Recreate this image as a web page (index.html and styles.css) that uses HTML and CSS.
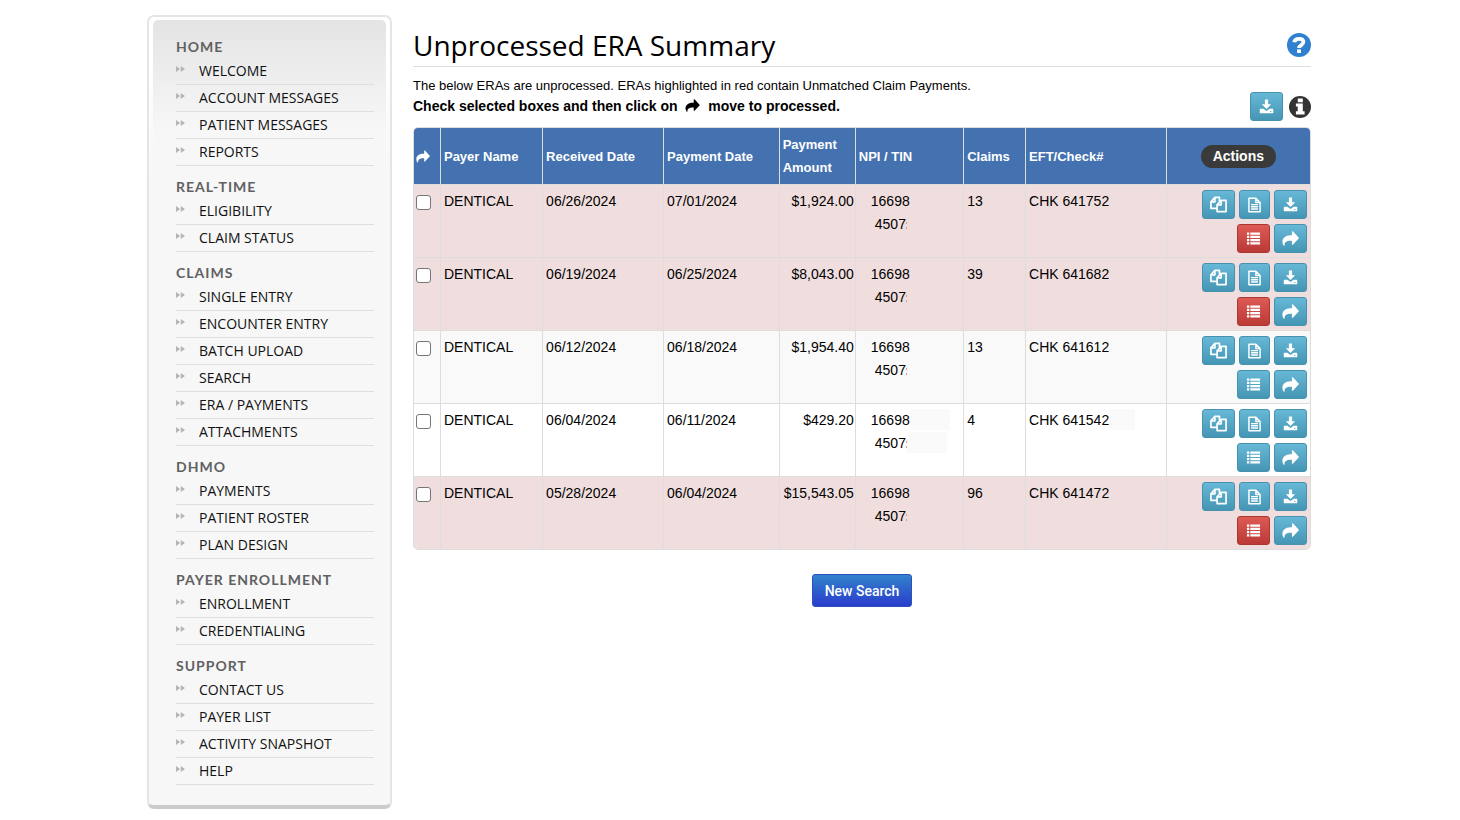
FILE: index.html
```html
<!DOCTYPE html>
<html lang="en">
<head>
<meta charset="utf-8">
<title>Unprocessed ERA Summary</title>
<link rel="stylesheet" href="styles.css">
</head>
<body>
<svg class="sprite" aria-hidden="true">
  <symbol id="i-share" viewBox="0 0 18 16"><path d="M10.500 .8v3.700H9C3.400 4.500.4 7.800.4 11.400c0 1.600.5 3 1.500 4.300.3.400.9.200.8-.3C2.400 12 4.800 10.400 9 10.400h1.500v3.700c0 .6.6.8 1 .4l6.100-6.400c.3-.3.3-.8 0-1.100L11.500.4c-.4-.4-1-.2-1 .4z"/></symbol>
  <symbol id="i-download" viewBox="0 0 16 16"><path d="M6.300 .5h3.400v5h3.300L8 10.600 3 5.500h3.300z"/><path fill-rule="evenodd" d="M1.500 10.300h3.200L8 12.800l3.300-2.500h3.200c.4 0 .7.3.7.7v3.600c0 .4-.3.700-.7.700h-13c-.4 0-.7-.3-.7-.7V11c0-.4.3-.7.7-.7zM12 12.800v1.100h1.200v-1.100z"/></symbol>
  <symbol id="i-copy" viewBox="0 0 18 18"><path fill="none" stroke="currentColor" stroke-width="1.800" stroke-linejoin="round" d="M7.300 13H1V6.200L5.200 1.500H10v4M5.200 1.500v4.700H1M11.800 4.700H17V16.500H7.500V9.300zM11.800 4.700v4.600H7.500"/></symbol>
  <symbol id="i-file" viewBox="0 0 14 16"><path fill="none" stroke="currentColor" stroke-width="1.600" stroke-linejoin="round" d="M1 .8h7.500L13 5.300v9.900H1zM8.500.8v4.500H13"/><path d="M3.300 6.800h7.400v1.400H3.300zM3.300 9.200h7.400v1.400H3.300zM3.300 11.600h7.400v1.400H3.300z"/></symbol>
  <symbol id="i-list" viewBox="0 0 16 16"><path d="M1 1.500h2.500v2.400H1zM4.600 1.500H15v2.400H4.600zM1 5h2.500v2.400H1zM4.600 5H15v2.400H4.600zM1 8.500h2.500v2.400H1zM4.600 8.500H15v2.400H4.600zM1 12h2.500v2.400H1zM4.600 12H15v2.400H4.600z"/></symbol>
  <symbol id="i-help" viewBox="0 0 24 24"><circle cx="12" cy="12" r="12" fill="#2f80cf"/><path fill="none" stroke="#fff" stroke-width="3.800" d="M7.200 9.200C7.600 6.800 9.500 5.800 12 5.800c2.600 0 4.400 1.200 4.400 3.300 0 3.200-4.300 2.800-4.300 6"/><path fill="#fff" d="M10.100 16.400H14V20h-3.900z"/></symbol>
  <symbol id="i-info" viewBox="0 0 22 22"><circle cx="11" cy="11" r="11" fill="#333"/><path fill="#fff" d="M8.800 2.600h5v3.600h-5zM6.900 7.400h6.900v7.900h1.800v3.200H6.900v-3.200h1.800v-4.700H6.900z"/></symbol>
  <symbol id="i-bullet" viewBox="0 0 9 6"><path d="M0 0l4.200 3L0 6zM4.800 0L9 3 4.800 6z"/></symbol>
</svg>
<div class="page">
  <nav class="sidebar" aria-label="Main"><div class="menu" id="menu"></div></nav>
  <main class="content">
    <header class="title-bar">
      <h1>Unprocessed ERA Summary</h1>
      <button type="button" class="plain" aria-label="Help"><svg class="help"><use href="#i-help"/></svg></button>
    </header>
    <section class="intro">
      <div class="notes">
        <p>The below ERAs are unprocessed. ERAs highlighted in red contain Unmatched Claim Payments.</p>
        <p class="strong">Check selected boxes and then click on <svg class="inline-share"><use href="#i-share"/></svg> move to processed.</p>
      </div>
      <div class="tools">
        <button type="button" class="btn" aria-label="Download all"><svg class="ico"><use href="#i-download"/></svg></button>
        <button type="button" class="plain" aria-label="Information"><svg class="info"><use href="#i-info"/></svg></button>
      </div>
    </section>
    <table class="eras">
      <colgroup><col class="c-check"><col class="c-payer"><col class="c-received"><col class="c-paid"><col class="c-amount"><col class="c-npi"><col class="c-claims"><col class="c-eft"><col class="c-actions"></colgroup>
      <thead><tr>
        <th scope="col" aria-label="Move"><svg class="head-share"><use href="#i-share"/></svg></th>
        <th scope="col">Payer Name</th><th scope="col">Received Date</th><th scope="col">Payment Date</th><th scope="col">Payment Amount</th><th scope="col">NPI / TIN</th><th scope="col">Claims</th><th scope="col">EFT/Check#</th>
        <th scope="col" class="center"><span class="pill">Actions</span></th>
      </tr></thead>
      <tbody id="rows"></tbody>
    </table>
    <div class="footer"><button type="button" class="search">New Search</button></div>
  </main>
</div>
<script src="app.js"></script>
</body>
</html>
```

FILE: styles.css
```css
* { box-sizing: border-box; }
body { margin: 0; background: #fff; color: #000; font-family: "Liberation Sans", Arial, sans-serif; font-size: 14px; }
.sprite { display: none; }
svg { fill: currentColor; }
h1, h2, p, ul { margin: 0; padding: 0; }
.page { display: flex; align-items: flex-start; gap: 21px; max-width: 1168px; margin: 0 auto; padding: 15px 3px 11px 1px; }

.sidebar { flex: 0 0 245px; border: 2px solid #e5e5e5; border-bottom: 4px solid #ccc; border-radius: 7px; padding: 3px 4px; background: linear-gradient(#fff, #fff 40px, #f7f7f7 160px); }
.menu { padding: 6px 12px 17px 23px; border-radius: 5px; background: linear-gradient(#e4e4e4, #f7f7f7 110px); }
.menu h2 { padding-top: 10px; font: 700 14px/22px Lato, sans-serif; letter-spacing: 1px; color: #606163; }
.menu ul { list-style: none; }
.menu li { border-bottom: 1px solid #dfdfdf; }
.menu a { display: flex; align-items: flex-start; gap: 14px; color: #111; font: 14px/26px "Open Sans", sans-serif; text-decoration: none; }
.bullet { width: 9px; height: 6px; margin-top: 8px; color: #b5b5b5; }

.content { flex: 1; min-width: 0; }
.title-bar { display: flex; align-items: center; justify-content: space-between; height: 52px; padding-top: 9px; border-bottom: 1px solid #ddd; }
h1 { font: 400 28px/40px "Open Sans", sans-serif; }
.plain { display: flex; padding: 0; border: 0; background: none; }
.help { width: 24px; height: 24px; }
.info { width: 22px; height: 22px; }
.intro { display: flex; justify-content: space-between; padding: 9px 0 6px; }
.notes { font-size: 13px; line-height: 20px; }
.notes .strong { font-weight: 700; font-size: 14px; }
.inline-share { width: 15px; height: 13px; margin: 0 4px; vertical-align: -1px; }
.tools { display: flex; align-items: center; gap: 6px; padding-top: 16px; }

.btn { display: inline-flex; align-items: center; justify-content: center; height: 29px; padding: 0 8px; color: #fff; border: 1px solid #4793af; border-radius: 3px; background: linear-gradient(#66b8d6, #4496b4); }
.btn.red { border-color: #a83832; background: linear-gradient(#dd5a55, #bb3a36); }
.ico { width: 15px; height: 15px; }
.ico.narrow { width: 13px; height: 16px; }
.ico.wide { width: 17px; height: 17px; margin: 0 -1px; }

.eras { width: 100%; table-layout: fixed; border: 1px solid #ddd; border-radius: 5px; border-spacing: 0; overflow: hidden; }
.c-check { width: 2.9%; } .c-payer { width: 11.4%; } .c-received { width: 13.5%; } .c-paid { width: 12.9%; }
.c-amount { width: 8.5%; } .c-npi { width: 12.1%; } .c-claims { width: 6.9%; } .c-eft { width: 15.7%; } .c-actions { width: 16.1%; }
.eras th, .eras td { padding: 5px 3px; line-height: 23px; text-align: left; }
.eras tr > :first-child { padding: 5px 2px; }
.eras th + th, .eras td + td { border-left: 1px solid #ddd; }
.eras th { background: #4472b1; color: #fff; font-size: 13px; vertical-align: middle; }
.eras td { border-top: 1px solid #ddd; padding-bottom: 4px; vertical-align: top; white-space: nowrap; }
.eras .alert td { background: #f0dede; }
.eras .odd td { background: #f9f9f9; }
.eras .center { text-align: center; }
.eras .amount { padding-right: 1px; text-align: right; }
.eras .npi { padding-left: 15px; }
.tin { padding-left: 4px; }
.head-share { display: block; width: 14px; height: 13px; }
.pill { display: inline-block; padding: 0 12px; border-radius: 12px; background: #3a3a3a; font-size: 14px; }
.check { display: block; width: 15px; height: 15px; margin: 5px 0 0; appearance: none; border: 1px solid #767676; border-radius: 3px; background: #fff; }
.check:checked { background: #4472b1; }
.actions { display: flex; flex-wrap: wrap; justify-content: flex-end; gap: 5px 4px; max-width: 108px; margin-left: auto; }
.trace { display: inline-block; width: 1px; height: 7px; background: linear-gradient(#d9a08a 2px, transparent 2px 5px, #d9a08a 5px); }
.mask { display: inline-block; width: 40px; height: 21px; background: #fafafa; vertical-align: top; }
.mask.short { width: 26px; }

.footer { padding-top: 24px; text-align: center; }
.search { height: 33px; padding: 0 12px; color: #fff; font: 500 14px/20px Roboto, sans-serif; border: 1px solid #2a52b8; border-radius: 3px; background: linear-gradient(#3282cc, #2a3ccc); }
```

FILE: app.js
```js
const sections = {
  "HOME": ["WELCOME", "ACCOUNT MESSAGES", "PATIENT MESSAGES", "REPORTS"],
  "REAL-TIME": ["ELIGIBILITY", "CLAIM STATUS"],
  "CLAIMS": ["SINGLE ENTRY", "ENCOUNTER ENTRY", "BATCH UPLOAD", "SEARCH", "ERA / PAYMENTS", "ATTACHMENTS"],
  "DHMO": ["PAYMENTS", "PATIENT ROSTER", "PLAN DESIGN"],
  "PAYER ENROLLMENT": ["ENROLLMENT", "CREDENTIALING"],
  "SUPPORT": ["CONTACT US", "PAYER LIST", "ACTIVITY SNAPSHOT", "HELP"]
};
document.getElementById("menu").innerHTML = Object.entries(sections).map(([name, items]) =>
  `<h2>${name}</h2><ul>` + items.map(item =>
    `<li><a href="#"><svg class="bullet"><use href="#i-bullet"/></svg>${item}</a></li>`).join("") + "</ul>").join("");

const rows = [
  ["06/26/2024", "07/01/2024", "$1,924.00", "13", "CHK 641752", "alert"],
  ["06/19/2024", "06/25/2024", "$8,043.00", "39", "CHK 641682", "alert"],
  ["06/12/2024", "06/18/2024", "$1,954.40", "13", "CHK 641612", "odd"],
  ["06/04/2024", "06/11/2024", "$429.20", "4", "CHK 641542", "even"],
  ["05/28/2024", "06/04/2024", "$15,543.05", "96", "CHK 641472", "alert"]
];
const button = (icon, label, size = "", tone = "") =>
  `<button type="button" class="btn ${tone}" aria-label="${label}"><svg class="ico ${size}"><use href="#i-${icon}"/></svg></button>`;
document.getElementById("rows").innerHTML = rows.map(([received, paid, amount, claims, eft, kind]) => {
  const mask = kind === "even" ? '<span class="mask"></span>' : "";
  const shortMask = kind === "even" ? '<span class="mask short"></span>' : "";
  return `<tr class="${kind}">
    <td><input type="checkbox" class="check" aria-label="Select ${eft}"></td>
    <td>DENTICAL</td><td>${received}</td><td>${paid}</td><td class="amount">${amount}</td>
    <td class="npi"><div>16698${mask}</div><div class="tin">4507<span class="trace"></span>${mask}</div></td>
    <td>${claims}</td><td>${eft}${shortMask}</td>
    <td><div class="actions">${button("copy", "Copy", "wide")}${button("file", "View", "narrow")}${button("download", "Download")}${button("list", "Claims", "", kind === "alert" ? "red" : "")}${button("share", "Move to processed", "wide")}</div></td>
  </tr>`;
}).join("");
```
